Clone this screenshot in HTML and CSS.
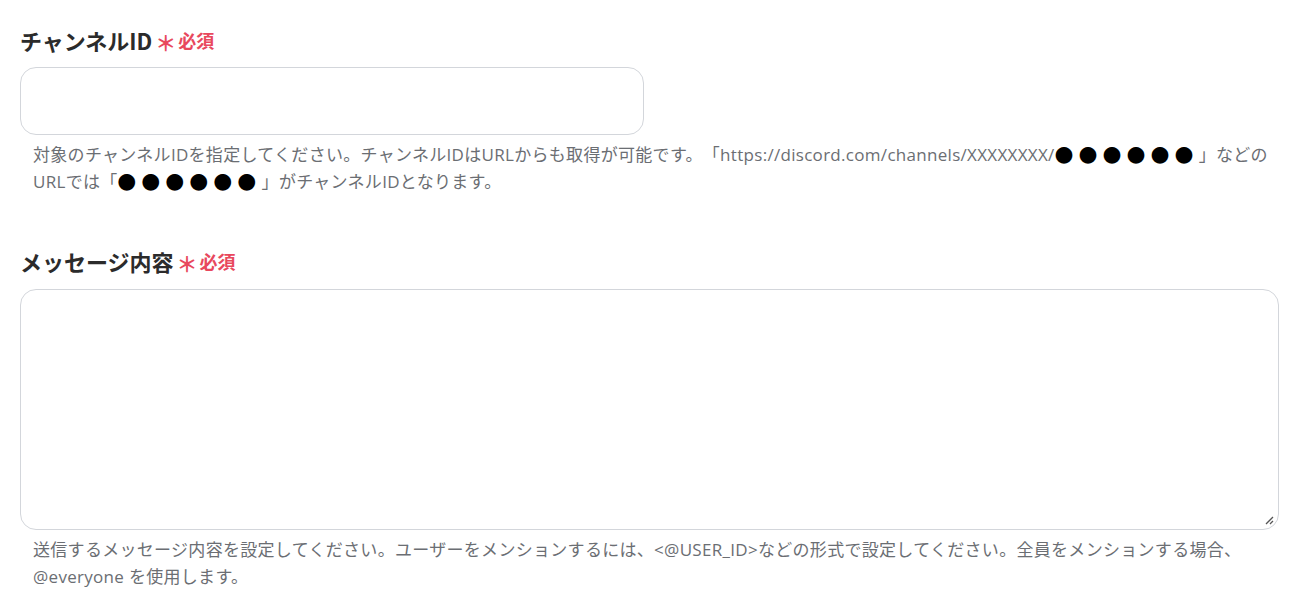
FILE: index.html
```html
<!DOCTYPE html>
<html lang="ja">
<head>
<meta charset="utf-8">
<link rel="stylesheet" href="styles.css">
</head>
<body>
<div class="form">
  <div class="field">
    <div class="label">チャンネルID<span class="req"><span class="ast">＊</span>必須</span></div>
    <div class="input"></div>
    <p class="help">対象のチャンネルIDを指定してください。チャンネルIDはURLからも取得が可能です。「https://discord.com/channels/XXXXXXXX/<span class="dots">●●●●●●</span>」などのURLでは「<span class="dots">●●●●●●</span>」がチャンネルIDとなります。</p>
  </div>
  <div class="field second">
    <div class="label">メッセージ内容<span class="req"><span class="ast">＊</span>必須</span></div>
    <div class="textarea"><svg class="grip" width="10" height="10" viewBox="0 0 10 10"><path d="M9 2 L2 9 M9 6 L6 9" stroke="#555" stroke-width="1.3" fill="none"/></svg></div>
    <p class="help">送信するメッセージ内容を設定してください。ユーザーをメンションするには、&lt;@USER_ID&gt;などの形式で設定してください。全員をメンションする場合、@everyone を使用します。</p>
  </div>
</div>
</body>
</html>
```
FILE: styles.css
```css
html, body { margin: 0; padding: 0; background: #fff; }
body {
  font-family: "Open Sans", "Noto Sans CJK JP", sans-serif;
  color: #222;
}
.form { padding: 25px 33px 0 20px; }
.field { display: flex; flex-direction: column; }
.second { margin-top: 51px; }
.label {
  font-family: "Noto Sans CJK JP", sans-serif;
  font-weight: 700;
  font-size: 22px;
  line-height: 30px;
  height: 30px;
  color: #2b2b2b;
  display: flex;
  align-items: center;
}
.req {
  color: #e8485d;
  font-size: 18px;
  line-height: 1;
  margin-left: 3px;
  display: flex;
  align-items: center;
}
.ast { font-size: 21px; line-height: 1; margin-right: 2px; margin-top: 5px; }
.input {
  margin-top: 12px;
  width: 622px;
  height: 66px;
  border: 1px solid #d3d6db;
  border-radius: 16px;
}
.textarea {
  margin-top: 13px;
  height: 239px;
  border: 1px solid #d3d6db;
  border-radius: 16px;
  position: relative;
}
.grip { position: absolute; right: 4px; bottom: 4px; }
.help {
  margin: 6px 0 0 13px;
  font-size: 17px;
  letter-spacing: 0.3px;
  line-height: 27px;
  color: #6b6e73;
  text-spacing-trim: space-all;
}
.dots {
  color: #000;
  font-size: 18.5px;
  line-height: 0;
  letter-spacing: 5.5px;
  vertical-align: -1px;
}
```
